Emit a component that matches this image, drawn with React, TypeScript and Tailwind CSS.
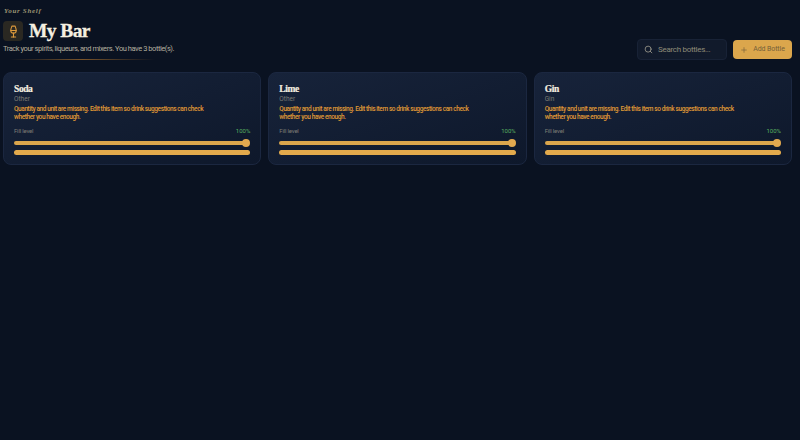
import { Plus, Search, Wine } from "lucide-react";

const bottles = [
  { name: "Soda", type: "Other" },
  { name: "Lime", type: "Other" },
  { name: "Gin", type: "Gin" },
];

function BottleCard({ name, type }: { name: string; type: string }) {
  return (
    <div className="h-[93px] rounded-[8px] border border-[#1b2740] bg-gradient-to-br from-[#17233a] to-[#0e182b] px-[10px] pt-[10px]">
      <h3 className="font-['Liberation_Serif',serif] text-[9.5px] leading-[12px] font-bold tracking-[-0.4px] text-[#f5efe0] [-webkit-text-stroke:0.2px_#f5efe0]">
        {name}
      </h3>
      <p className="font-['Roboto'] text-[6.5px] leading-[9px] text-[#7f7d75]">{type}</p>
      <p className="mt-[1px] w-[192px] font-['Roboto'] text-[6.5px] leading-[8px] font-medium tracking-[-0.4px] text-[#e09a35]">
        Quantity and unit are missing. Edit this item so drink suggestions can check whether you have enough.
      </p>
      <div className="mt-[6px] flex items-center justify-between font-['Roboto'] text-[6px] leading-[8px]">
        <span className="tracking-[-0.2px] text-[#7f7d75]">Fill level</span>
        <span className="text-[#58b060]">100%</span>
      </div>
      <div className="mt-[4px] flex items-center">
        <div className="h-[4px] flex-1 rounded-full bg-[#dba64c]" />
        <div className="-ml-[4px] h-[8px] w-[8px] rounded-full bg-[#e2a94f]" />
      </div>
      <div className="mt-[3px] h-[5px] rounded-full bg-[#e3aa4c]" />
    </div>
  );
}

export default function App() {
  return (
    <div className="h-[440px] w-[800px] overflow-hidden bg-[#0a1221] pr-[8px] pl-[3px] font-['Roboto',sans-serif]">
      <div className="flex h-[72px] items-start justify-between">
        <div>
          <p className="pt-[7px] pl-[1px] font-['Liberation_Serif'] text-[7px] leading-[9px] font-bold tracking-[0.7px] text-[#9a9272] italic">
            Your Shelf
          </p>
          <div className="mt-[3px] flex items-center gap-[6px]">
            <div className="flex h-[20px] w-[20px] items-center justify-center rounded-[4px] bg-[#2a2822]">
              <Wine size={13} strokeWidth={2} className="text-[#dd9a3c]" />
            </div>
            <h1 className="font-['Liberation_Serif',serif] text-[19.5px] leading-[24px] font-bold tracking-[-0.6px] text-[#f5efe0] [-webkit-text-stroke:0.3px_#f5efe0]">
              My Bar
            </h1>
          </div>
          <p className="mt-[1px] text-[7.5px] leading-[10px] tracking-[-0.45px] text-[#b3ae9f]">
            Track your spirits, liqueurs, and mixers. You have 3 bottle(s).
          </p>
          <div className="mt-[5px] ml-[7px] h-[1px] w-[145px] bg-gradient-to-r from-transparent via-[#7a5429] to-transparent" />
        </div>
        <div className="mt-[39px] flex items-center gap-[6px]">
          <div className="flex h-[21px] w-[90px] items-center gap-[5px] rounded-[4px] border border-[#182236] bg-[#111a2b] pl-[6px]">
            <Search size={9} className="text-[#a9a596]" />
            <span className="text-[8px] tracking-[-0.3px] text-[#8f8c78]">Search bottles...</span>
          </div>
          <button className="flex h-[19px] w-[59px] items-center justify-center gap-[5px] rounded-[4px] bg-[#dba64c] text-[7px] tracking-[-0.1px] text-[#75603a]">
            <Plus size={8} />
            Add Bottle
          </button>
        </div>
      </div>
      <div className="grid grid-cols-3 gap-[7px]">
        {bottles.map((b) => (
          <BottleCard key={b.name} name={b.name} type={b.type} />
        ))}
      </div>
    </div>
  );
}
